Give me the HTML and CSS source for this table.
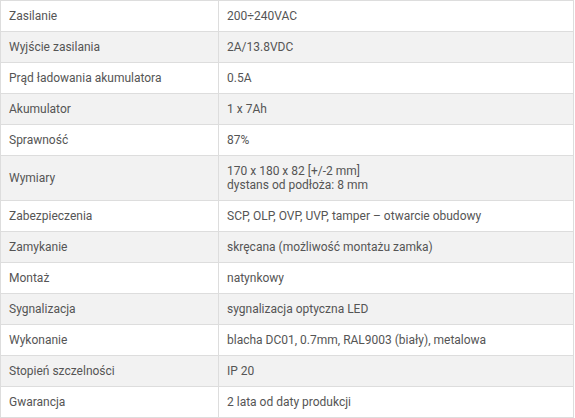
FILE: index.html
```html
<!DOCTYPE html>
<html lang="pl">
<head>
<meta charset="utf-8">
<link rel="stylesheet" href="styles.css">
</head>
<body>
<table class="spec">
<tbody>
<tr><td class="k">Zasilanie</td><td class="v">200÷240VAC</td></tr>
<tr><td class="k">Wyjście zasilania</td><td class="v">2A/13.8VDC</td></tr>
<tr><td class="k">Prąd ładowania akumulatora</td><td class="v">0.5A</td></tr>
<tr><td class="k">Akumulator</td><td class="v">1 x 7Ah</td></tr>
<tr><td class="k">Sprawność</td><td class="v">87%</td></tr>
<tr><td class="k">Wymiary</td><td class="v">170 x 180 x 82 [+/-2 mm]<br>dystans od podłoża: 8 mm</td></tr>
<tr><td class="k">Zabezpieczenia</td><td class="v">SCP, OLP, OVP, UVP, tamper – otwarcie obudowy</td></tr>
<tr><td class="k">Zamykanie</td><td class="v">skręcana (możliwość montażu zamka)</td></tr>
<tr><td class="k">Montaż</td><td class="v">natynkowy</td></tr>
<tr><td class="k">Sygnalizacja</td><td class="v">sygnalizacja optyczna LED</td></tr>
<tr><td class="k">Wykonanie</td><td class="v">blacha DC01, 0.7mm, RAL9003 (biały), metalowa</td></tr>
<tr><td class="k">Stopień szczelności</td><td class="v">IP 20</td></tr>
<tr><td class="k">Gwarancja</td><td class="v">2 lata od daty produkcji</td></tr>
</tbody>
</table>
</body>
</html>
```
FILE: styles.css
```css
html, body {
  margin: 0;
  padding: 0;
  background: #ffffff;
}
.spec {
  border-collapse: collapse;
  width: 574px;
  font-family: Roboto, "Liberation Sans", sans-serif;
  font-size: 12px;
  line-height: 14px;
  color: #555555;
}
.spec td {
  border: 1px solid #dddddd;
  padding: 8px 8px;
  vertical-align: middle;
  text-align: left;
}
.spec .k {
  width: 201px;
}
.spec tr:nth-child(even) td {
  background: #f2f2f2;
}
```
